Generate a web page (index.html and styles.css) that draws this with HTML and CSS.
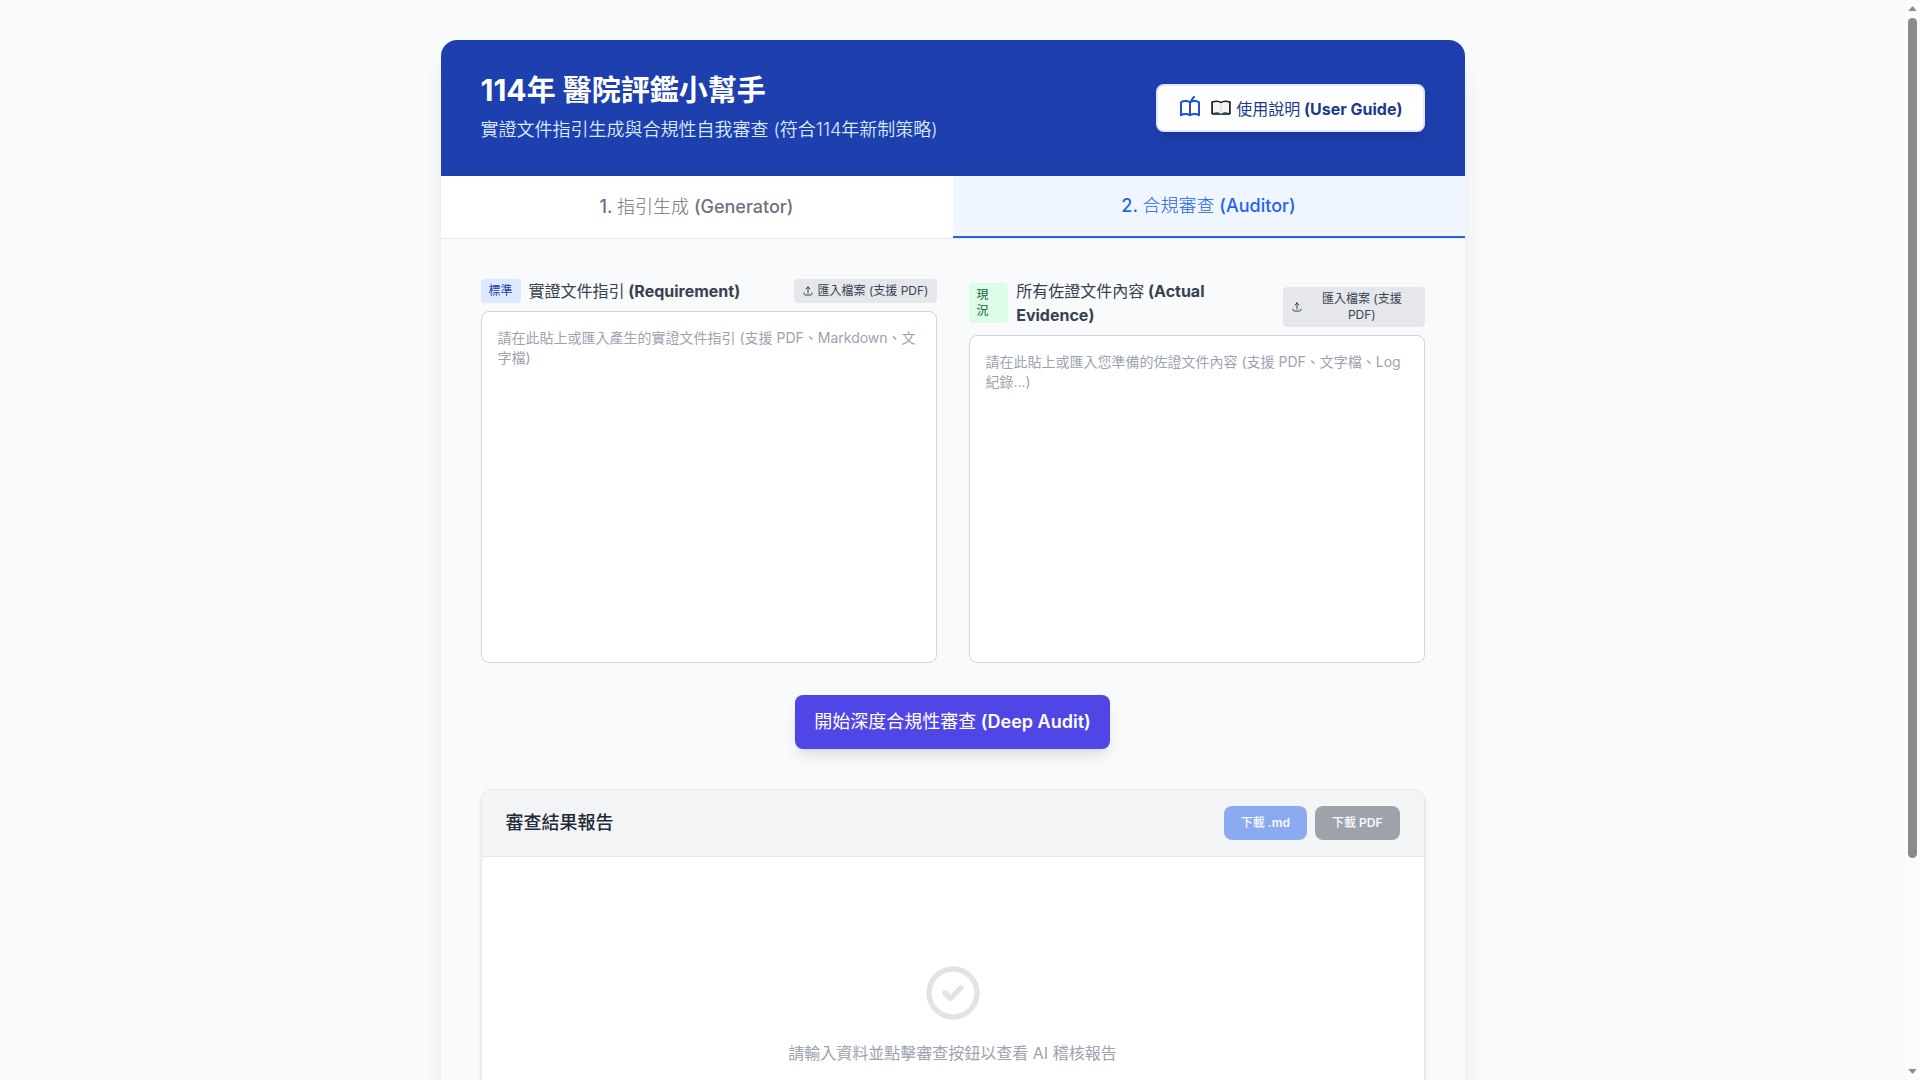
FILE: index.html
```html
<!DOCTYPE html>
<html lang="zh-Hant">
  <head>
    <meta charset="UTF-8" />
    <meta name="viewport" content="width=device-width, initial-scale=1.0" />
    <title>114年 醫院評鑑小幫手</title>
    <link rel="stylesheet" href="styles.css">
  </head>
  <body>
    <div class="container">
      <header>
        <div>
          <h1>114<span class="zh-title">年</span> <span class="zh-title">醫院評鑑小幫手</span></h1>
          <p>實證文件指引生成與合規性自我審查 (符合114年新制策略)</p>
        </div>
        <button type="button" class="guide-btn">
          <svg class="icon-book" viewBox="0 0 24 24" fill="none" stroke="currentColor" stroke-width="2" stroke-linecap="round" stroke-linejoin="round" aria-hidden="true">
            <path d="M12 6.253v13m0-13C10.832 5.477 9.246 5 7.5 5S4.168 5.477 3 6.253v13C4.168 18.477 5.754 18 7.5 18s3.332.477 4.500 1.253m0-13C13.168 5.477 14.754 5 16.5 5c1.747 0 3.332.477 4.5 1.253v13C19.832 18.477 18.247 18 16.5 18c-1.746 0-3.332.477-4.5 1.253"/>
            <path d="M12 6.253C13.500 5 14 3 16 1"/>
          </svg>
          <span class="guide-label">
            <svg class="icon-emoji" viewBox="0 0 20 16" aria-hidden="true">
              <path d="M1 2h18v13H1z" fill="#2f4858"/>
              <path d="M2 2c3-1 6-1 8 1 2-2 5-2 8-1v11c-3-1-6-1-8 1-2-2-5-2-8-1z" fill="#f3f4f6"/>
              <path d="M1 14V2c3-1 7-1 9 .5 2-1.500 6-1.500 9-.5v12" fill="none" stroke="#1b1b1b" stroke-width="1.500"/>
              <path d="M10 3v10" stroke="#d1d5db"/>
            </svg>
            <span><span class="zh">使用說明</span> (User Guide)</span>
          </span>
        </button>
      </header>

      <nav class="tabs">
        <button type="button" class="tab">1. <span class="zh">指引生成</span> (Generator)</button>
        <button type="button" class="tab active">2. <span class="zh">合規審查</span> (Auditor)</button>
      </nav>

      <main>
        <div class="inputs">
          <section class="field">
            <div class="field-head">
              <label for="requirement"><span class="badge badge-blue">標準</span><span><span class="zh">實證文件指引</span> (Requirement)</span></label>
              <button type="button" class="import-btn">
                <svg viewBox="0 0 24 24" fill="none" stroke="currentColor" stroke-width="2" stroke-linecap="round" stroke-linejoin="round" aria-hidden="true"><path d="M4 16v1a3 3 0 003 3h10a3 3 0 003-3v-1m-4-8l-4-4m0 0L8 8m4-4v12"/></svg>
                <span>匯入檔案 (支援 PDF)</span>
              </button>
            </div>
            <textarea id="requirement" placeholder="請在此貼上或匯入產生的實證文件指引 (支援 PDF、Markdown、文字檔)"></textarea>
          </section>

          <section class="field">
            <div class="field-head">
              <label for="evidence"><span class="badge badge-green">現況</span><span><span class="zh">所有佐證文件內容</span> (Actual Evidence)</span></label>
              <button type="button" class="import-btn">
                <svg viewBox="0 0 24 24" fill="none" stroke="currentColor" stroke-width="2" stroke-linecap="round" stroke-linejoin="round" aria-hidden="true"><path d="M4 16v1a3 3 0 003 3h10a3 3 0 003-3v-1m-4-8l-4-4m0 0L8 8m4-4v12"/></svg>
                <span>匯入檔案 (支援 PDF)</span>
              </button>
            </div>
            <textarea id="evidence" placeholder="請在此貼上或匯入您準備的佐證文件內容 (支援 PDF、文字檔、Log 紀錄...)"></textarea>
          </section>
        </div>

        <button type="button" class="audit-btn"><span class="zh">開始深度合規性審查</span> (Deep Audit)</button>

        <section class="report">
          <div class="report-head">
            <h2>審查結果報告</h2>
            <div class="downloads">
              <button type="button" class="download md" disabled><span class="zh">下載</span> .md</button>
              <button type="button" class="download pdf" disabled><span class="zh">下載</span> PDF</button>
            </div>
          </div>
          <div class="report-body">
            <svg viewBox="0 0 24 24" fill="none" stroke="currentColor" stroke-width="2" stroke-linecap="round" stroke-linejoin="round" aria-hidden="true"><path d="M9 12l2 2 4-4m6 2a9 9 0 11-18 0 9 9 0 0118 0z"/></svg>
            <p>請輸入資料並點擊審查按鈕以查看 AI 稽核報告</p>
          </div>
        </section>
      </main>
    </div>

    <div class="scrollbar" aria-hidden="true">
      <svg viewBox="0 0 10 6"><path d="M5 0l5 6H0z"/></svg>
      <div class="track"><div class="thumb"></div></div>
      <svg viewBox="0 0 10 6"><path d="M0 0h10L5 6z"/></svg>
    </div>
  </body>
</html>
```
FILE: styles.css
```css
* {
  box-sizing: border-box;
}

html {
  scrollbar-width: none;
}

body {
  font-family: Inter, "Noto Sans CJK TC", sans-serif;
  font-size: 16px;
  line-height: 24px;
  margin: 0 15px 0 0;
  padding: 40px 16px;
  background: #f9fafb;
  color: #1f2937;
}

h1, h2, p {
  margin: 0;
}

button, textarea {
  font-family: inherit;
}

button {
  border: none;
  cursor: pointer;
}

.zh {
  font-weight: 400;
}

.container {
  max-width: 1024px;
  margin: 0 auto;
  background: #f9fafb;
  border-radius: 16px;
  overflow: hidden;
  box-shadow: 0 20px 25px -5px rgba(0, 0, 0, 0.1), 0 8px 10px -6px rgba(0, 0, 0, 0.1);
}

header {
  background: #1e40af;
  color: #fff;
  padding: 32px 40px;
  display: flex;
  align-items: center;
  justify-content: space-between;
}

h1 {
  font-size: 30px;
  line-height: 36px;
  font-weight: 700;
}

.zh-title {
  font-size: 29px;
  line-height: 1;
}

header p {
  margin-top: 8px;
  font-size: 18px;
  line-height: 28px;
  font-weight: 350;
  color: #dbeafe;
}

.guide-btn {
  display: flex;
  align-items: center;
  gap: 9px;
  height: 48px;
  padding: 0 20px;
  border: 2px solid #e0e7ff;
  border-radius: 8px;
  background: #fff;
  color: #1e3a8a;
  font-size: 16px;
  font-weight: 700;
  box-shadow: 0 10px 15px -3px rgba(0, 0, 0, 0.1), 0 4px 6px -4px rgba(0, 0, 0, 0.1);
}

.guide-label {
  display: flex;
  align-items: center;
  gap: 5px;
}

.icon-book {
  width: 24px;
  height: 24px;
  color: #1d4ed8;
}

.icon-emoji {
  width: 20px;
  height: 16px;
}

.tabs {
  display: flex;
  background: #fff;
  border-bottom: 1px solid #e5e7eb;
}

.tab {
  flex: 1;
  padding: 16px 0;
  background: #fff;
  color: #6b7280;
  font-size: 18px;
  line-height: 28px;
  font-weight: 500;
}

.tab .zh {
  font-weight: 300;
}

.tab.active {
  background: #eff6ff;
  color: #2563eb;
  border-bottom: 2px solid #2563eb;
}

main {
  padding: 40px;
  display: flex;
  flex-direction: column;
  gap: 32px;
}

.inputs {
  display: grid;
  grid-template-columns: 1fr 1fr;
  gap: 32px;
  height: 384px;
}

.field {
  display: flex;
  flex-direction: column;
  gap: 8px;
}

.field-head {
  display: flex;
  align-items: flex-end;
  justify-content: space-between;
}

.field-head label {
  display: flex;
  align-items: center;
  gap: 8px;
  font-weight: 700;
  color: #374151;
}

.badge {
  padding: 4px 8px;
  border-radius: 4px;
  font-size: 12px;
  line-height: 16px;
  font-weight: 400;
}

.badge-blue {
  background: #dbeafe;
  color: #1e40af;
}

.badge-green {
  background: #dcfce7;
  color: #166534;
}

.import-btn {
  display: flex;
  align-items: center;
  gap: 4px;
  padding: 4px 8px;
  border-radius: 4px;
  background: #e5e7eb;
  color: #374151;
  font-size: 12px;
  line-height: 16px;
}

.import-btn svg {
  width: 12px;
  height: 12px;
  flex-shrink: 0;
}

textarea {
  flex: 1;
  width: 100%;
  padding: 16px;
  border: 1px solid #d1d5db;
  border-radius: 8px;
  background: #fff;
  font-size: 14px;
  line-height: 20px;
  resize: none;
}

textarea::placeholder {
  color: #9ca3af;
}

.audit-btn {
  align-self: center;
  padding: 13px 19px;
  border-radius: 8px;
  background: #4f46e5;
  color: #fff;
  font-size: 18px;
  line-height: 28px;
  font-weight: 600;
  box-shadow: 0 10px 15px -3px rgba(0, 0, 0, 0.1), 0 4px 6px -4px rgba(0, 0, 0, 0.1);
}

.report {
  margin-top: 8px;
  border: 1px solid #e5e7eb;
  border-radius: 12px;
  overflow: hidden;
  background: #fff;
  box-shadow: 0 4px 6px -1px rgba(0, 0, 0, 0.1), 0 2px 4px -2px rgba(0, 0, 0, 0.1);
}

.report-head {
  display: flex;
  align-items: center;
  justify-content: space-between;
  padding: 16px 24px;
  background: #f3f4f6;
  border-bottom: 1px solid #e5e7eb;
}

h2 {
  font-size: 18px;
  line-height: 28px;
  font-weight: 500;
}

.downloads {
  display: flex;
  gap: 8px;
}

.download {
  padding: 9px 17px;
  border-radius: 8px;
  color: #fff;
  font-size: 12px;
  line-height: 16px;
  font-weight: 600;
  opacity: 0.5;
}

.download .zh {
  font-weight: 500;
}

.md {
  background: #2563eb;
}

.pdf {
  background: #4b5563;
}

.report-body {
  display: flex;
  flex-direction: column;
  align-items: center;
  gap: 16px;
  min-height: 412px;
  padding-top: 104px;
  color: #9ca3af;
}

.report-body svg {
  width: 64px;
  height: 64px;
  color: #e1e3e7;
}

/* page scrollbar */
.scrollbar {
  position: fixed;
  top: 0;
  right: 0;
  bottom: 0;
  width: 15px;
  padding: 6px 0;
  display: flex;
  flex-direction: column;
  align-items: center;
  gap: 7px;
  background: #fcfcfc;
}

.scrollbar svg {
  width: 9px;
  height: 5px;
  fill: #8b8b8b;
}

.track {
  flex: 1;
}

.thumb {
  width: 9px;
  height: 80.5%;
  border-radius: 5px;
  background: #8b8b8b;
}
```
